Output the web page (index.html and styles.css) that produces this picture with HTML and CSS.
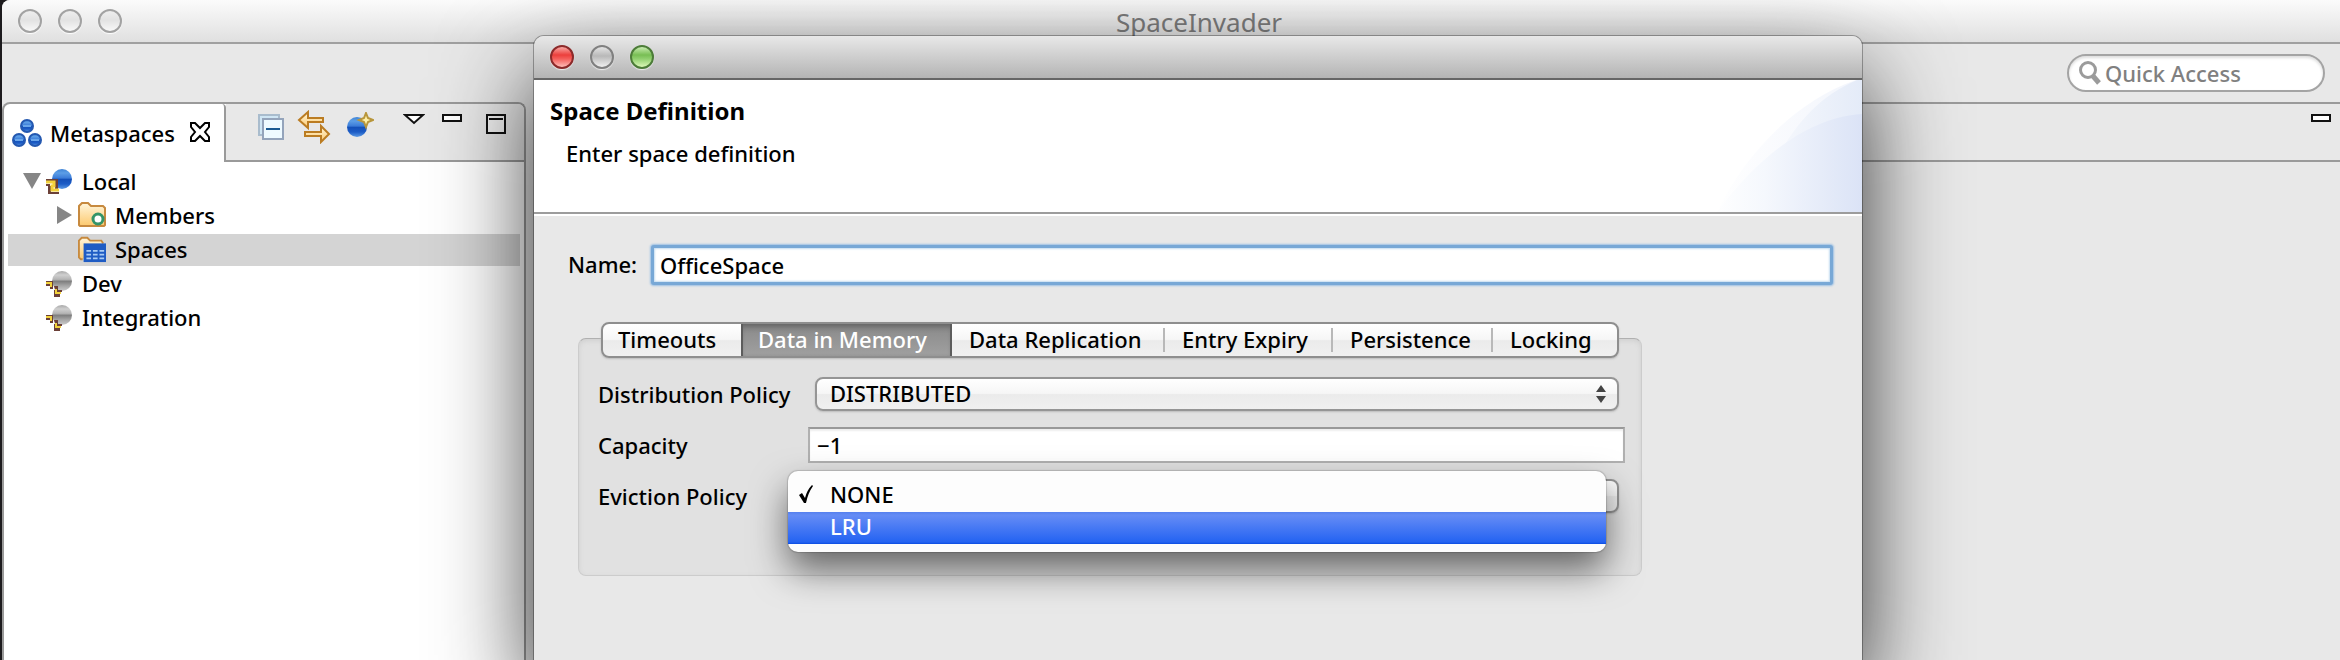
FILE: index.html
```html
<!DOCTYPE html>
<html lang="en">
<head>
<meta charset="utf-8">
<title>SpaceInvader</title>
<link rel="stylesheet" href="styles.css">
</head>
<body>
<svg class="defs" aria-hidden="true">
  <defs>
    <linearGradient id="blue" x1="0" y1="0" x2="0" y2="1">
      <stop offset="0" stop-color="#3f84d6"/><stop offset=".2" stop-color="#5c9ee6"/><stop offset=".45" stop-color="#3c7cd8"/>
      <stop offset=".52" stop-color="#1450b8"/><stop offset=".75" stop-color="#1c5cc6"/><stop offset="1" stop-color="#5c9ae4"/>
    </linearGradient>
    <linearGradient id="grey" x1="0" y1="0" x2="0" y2="1">
      <stop offset="0" stop-color="#a8a8a8"/><stop offset=".2" stop-color="#cfcfcf"/><stop offset=".42" stop-color="#b4b4b4"/>
      <stop offset=".52" stop-color="#808080"/><stop offset=".75" stop-color="#a8a8a8"/><stop offset="1" stop-color="#cccccc"/>
    </linearGradient>
    <linearGradient id="gold" x1="0" y1="0" x2="0" y2="1">
      <stop offset="0" stop-color="#fff6dc"/><stop offset="1" stop-color="#fcc96e"/>
    </linearGradient>
    <symbol id="connected" viewBox="0 0 28 28">
      <circle cx="17" cy="12" r="10" fill="url(#blue)"/>
      <path d="M1 12h12v2H1zM1 17h4v2H1zM10 14h3v8h-3zM3 19h3v7H3zM3 25h11v2H3z" fill="#6b4038"/>
      <path d="M1 15h8v4H7v4h7" fill="none" stroke="#f2d23c" stroke-width="3"/>
    </symbol>
    <symbol id="disconnected" viewBox="0 0 28 28">
      <circle cx="17" cy="12" r="10" fill="url(#grey)"/>
      <path d="M1 12h7v8H5v-3H1zM9 17h4v4h4v2h-2v5H9v-7h1z" fill="#6b4038"/>
      <path d="M1 14h5v4M11 20v4h5" fill="none" stroke="#f2d23c" stroke-width="2"/>
    </symbol>
  </defs>
</svg>

<div class="desktop">
  <main class="window">
    <header class="titlebar">
      <div class="lights">
        <button class="light" aria-label="Close window"></button>
        <button class="light" aria-label="Minimize window"></button>
        <button class="light" aria-label="Zoom window"></button>
      </div>
      <h1 class="title">SpaceInvader</h1>
    </header>

    <div class="toolbar">
      <label class="search">
        <svg width="24" height="26" viewBox="0 0 24 26" fill="none" stroke="#9b9b9b"><circle cx="10" cy="10" r="7.500" stroke-width="3"/><path d="M15 16l6 7" stroke-width="5"/></svg>
        <input type="search" placeholder="Quick Access" aria-label="Quick Access">
      </label>
    </div>

    <div class="workbench">
      <section class="view">
        <div class="view-bar">
          <div class="view-tab">
            <svg width="30" height="30" viewBox="0 0 30 30" fill="url(#blue)" stroke="#2458b0" stroke-width="2">
              <circle cx="15" cy="8" r="6"/><circle cx="7" cy="22" r="6"/><circle cx="23" cy="22" r="6"/>
              <path d="M11 8h8M3 22h8M19 22h8" stroke="#6aa6ea" stroke-width="2"/>
            </svg>
            <span>Metaspaces</span>
            <button class="tool close" aria-label="Close view"><svg width="22" height="22" viewBox="0 0 22 22"><path d="M2 2h4l5 5 5-5h4v4l-4 5 4 5v4h-4l-5-5-5 5H2v-4l4-5-4-5z" fill="#fff" stroke="#000" stroke-width="2"/></svg></button>
          </div>
          <div class="view-tools">
            <button class="tool" aria-label="Collapse all"><svg width="28" height="28" viewBox="0 0 28 28"><path d="M2 2h20v20H2z" fill="#cfe6f4" stroke="#a9bccd" stroke-width="2"/><path d="M6 6h20v20H6z" fill="#eefaff" stroke="#94a4bb" stroke-width="2"/><path d="M9 16h14" stroke="#1b5a92" stroke-width="2"/></svg></button>
            <button class="tool" aria-label="Link with editor"><svg width="34" height="34" viewBox="0 0 34 34" fill="url(#gold)" stroke="#bb7c22" stroke-width="2"><path d="M2 10l9-8v6h15v4H11v6z"/><path d="M32 24l-8-8v6H8v4h16v6z"/></svg></button>
            <button class="tool" aria-label="New metaspace"><svg width="28" height="28" viewBox="0 0 28 28"><circle cx="11" cy="15" r="10" fill="url(#blue)"/><path d="M20 1l2 5 5 2-5 2-2 5-2-5-5-2 5-2z" fill="#fff0a8" stroke="#b8963c" stroke-width="2"/></svg></button>
            <button class="tool menu" aria-label="View menu"><svg width="22" height="12" viewBox="0 0 22 12"><path d="M2 2h18l-9 8z" fill="#fff" stroke="#111" stroke-width="2"/></svg></button>
            <button class="tool" aria-label="Minimize"><svg width="22" height="10" viewBox="0 0 22 10"><path d="M2 2h18v6H2z" fill="#fff" stroke="#111" stroke-width="2"/></svg></button>
            <button class="tool maximize" aria-label="Maximize"><svg width="22" height="22" viewBox="0 0 22 22"><path d="M2 2h18v18H2z" fill="#f4f4f4" stroke="#111" stroke-width="2"/><path d="M4 6h14" stroke="#111" stroke-width="2"/></svg></button>
          </div>
        </div>
        <ul class="tree">
          <li class="node">
            <button class="twisty" aria-label="Collapse Local"><svg width="18" height="16"><path d="M0 0h18L9 16z" fill="#868686"/></svg></button>
            <svg class="icon"><use href="#connected"/></svg><span>Local</span>
          </li>
          <li class="node child">
            <button class="twisty" aria-label="Expand Members"><svg width="18" height="18"><path d="M1 0v18l15-9z" fill="#868686"/></svg></button>
            <svg class="icon" viewBox="0 0 28 28"><path d="M1 24V5l3-3h6l3 3h12l2 2v17l-1 1H2z" fill="url(#gold)" stroke="#c78a3f" stroke-width="2"/><circle cx="20" cy="18" r="5" fill="#fff" stroke="#349468" stroke-width="3"/></svg><span>Members</span>
          </li>
          <li class="node child selected">
            <span class="twisty"></span>
            <svg class="icon" viewBox="0 0 30 28"><path d="M5 25H3l-2-2V5l3-3h6l3 3h12l2 3" fill="url(#gold)" stroke="#c78a3f" stroke-width="2"/><path d="M6 8h24v20H6z" fill="#1f5cc4"/><path d="M9 16h5m2 0h5m2 0h5M9 20h5m2 0h5m2 0h5M9 24h5m2 0h5m2 0h5" stroke="#a9cbf4" stroke-width="2"/></svg><span>Spaces</span>
          </li>
          <li class="node"><span class="twisty"></span><svg class="icon"><use href="#disconnected"/></svg><span>Dev</span></li>
          <li class="node"><span class="twisty"></span><svg class="icon"><use href="#disconnected"/></svg><span>Integration</span></li>
        </ul>
      </section>
      <section class="editor">
        <div class="editor-bar">
          <button class="tool" aria-label="Minimize editor"><svg width="22" height="10" viewBox="0 0 22 10"><path d="M2 2h18v6H2z" fill="#fff" stroke="#111" stroke-width="2"/></svg></button>
        </div>
      </section>
    </div>
  </main>

  <div class="dialog" role="dialog" aria-labelledby="dialog-title">
    <div class="dialog-bar">
      <button class="light red" aria-label="Close dialog"></button>
      <button class="light dim" aria-label="Minimize dialog"></button>
      <button class="light green" aria-label="Zoom dialog"></button>
    </div>
    <header class="dialog-head">
      <div>
        <h2 id="dialog-title">Space Definition</h2>
        <p>Enter space definition</p>
      </div>
      <svg class="art" width="150" height="132" viewBox="0 0 150 132">
        <defs>
          <linearGradient id="outer" gradientUnits="userSpaceOnUse" x1="0" y1="0" x2="150" y2="0"><stop offset="0" stop-color="#fff"/><stop offset="1" stop-color="#f2f5fc"/></linearGradient>
          <linearGradient id="middle" gradientUnits="userSpaceOnUse" x1="20" y1="0" x2="150" y2="0"><stop offset="0" stop-color="#fff"/><stop offset="1" stop-color="#e4ebf8"/></linearGradient>
          <linearGradient id="inner" gradientUnits="userSpaceOnUse" x1="0" y1="0" x2="150" y2="0"><stop offset="0" stop-color="#fff"/><stop offset=".35" stop-color="#f5f8fd"/><stop offset="1" stop-color="#dbe3f6"/></linearGradient>
        </defs>
        <path d="M5 132C30 80 80 20 150 -2V132z" fill="url(#outer)"/>
        <path d="M40 132C70 60 95 20 150 -2V132z" fill="url(#middle)"/>
        <path d="M5 132C40 85 90 38 150 34V132z" fill="url(#inner)"/>
      </svg>
    </header>
    <form class="dialog-body">
      <div class="name-row">
        <label for="name">Name:</label>
        <input id="name" class="focused" type="text" value="OfficeSpace">
      </div>
      <div class="group">
        <div class="tabs" role="tablist">
          <button type="button" role="tab">Timeouts</button>
          <button type="button" role="tab" class="active" aria-selected="true">Data in Memory</button>
          <button type="button" role="tab">Data Replication</button>
          <button type="button" role="tab">Entry Expiry</button>
          <button type="button" role="tab">Persistence</button>
          <button type="button" role="tab">Locking</button>
        </div>
        <div class="fields">
          <label for="distribution">Distribution Policy</label>
          <div class="popup-button">
            <select id="distribution"><option>DISTRIBUTED</option></select>
            <svg width="10" height="18"><path d="M5 0l5 7H0zM5 18l5-7H0z" fill="#444"/></svg>
          </div>
          <label for="capacity">Capacity</label>
          <input id="capacity" type="text" value="−1">
          <label for="eviction">Eviction Policy</label>
          <div class="popup-button">
            <select id="eviction"><option>NONE</option><option>LRU</option></select>
            <ul class="menu-list" role="listbox" aria-label="Eviction Policy">
              <li role="option" aria-selected="true"><svg width="16" height="20" viewBox="0 0 16 20"><path d="M1 11l3-2 3 5Q9 6 14 1l1 1Q10 9 8 19H6z"/></svg>NONE</li>
              <li role="option" class="hover">LRU</li>
            </ul>
          </div>
        </div>
      </div>
    </form>
  </div>
</div>
</body>
</html>
```
FILE: styles.css
```css
* { box-sizing: border-box; }

body {
  margin: 0;
  font: 500 22px/30px "Noto Sans", "Open Sans", sans-serif;
  color: #000;
}

h1, h2, p, ul { margin: 0; padding: 0; }
ul { list-style: none; }
svg { display: block; flex: none; }
button, input, select { font: inherit; color: inherit; margin: 0; }
.defs { position: absolute; width: 0; height: 0; }

.desktop {
  position: relative;
  display: flex;
  min-height: 100vh;
  padding-left: 2px;
  background: #1d1b1e;
  overflow: hidden;
}

/* Main window */
.window {
  flex: 1;
  display: flex;
  flex-direction: column;
  background: #e8e8e8;
  border-top-left-radius: 8px;
}

.titlebar {
  display: flex;
  align-items: center;
  height: 44px;
  padding-left: 16px;
  background: linear-gradient(#fbfbfb, #e0e0e0);
  border-bottom: 2px solid #a0a0a0;
  border-top-left-radius: 8px;
}

.lights { display: flex; gap: 16px; width: 104px; }

.light {
  width: 24px;
  height: 24px;
  padding: 0;
  border: 2px solid #a2a2a2;
  border-radius: 50%;
  background: linear-gradient(#eee, #e2e2e2 45%, #f8f8f8);
  box-shadow: 0 1px 1px #fff;
}

.light.dim {
  border-color: #808080;
  background: linear-gradient(#e4e4e4, #b8b8b8 45%, #f0f0f0);
}
.light.red {
  border-color: #8c2a2a;
  background: linear-gradient(#f9a8a4, #ec3f3c 40%, #f4605c 60%, #ffbdb8);
}
.light.green {
  border-color: #4c7c38;
  background: linear-gradient(#c8ecb0, #78be54 40%, #92d070 60%, #dcf8b8);
}
.light.dim, .light.red, .light.green { box-shadow: 0 1px 1px #eee; }

.title {
  flex: 1;
  padding: 2px 64px 0 0;
  text-align: center;
  font-size: 26px;
  font-weight: 400;
  color: #7c7c7c;
}

.toolbar {
  display: flex;
  justify-content: flex-end;
  align-items: center;
  height: 58px;
  padding-right: 15px;
}

.search {
  display: flex;
  align-items: center;
  gap: 3px;
  width: 258px;
  height: 38px;
  padding: 0 9px;
  background: #fff;
  border: 2px solid #a4a4a4;
  border-radius: 19px;
  box-shadow: inset 0 2px 3px #ddd;
}
.search input {
  flex: 1;
  min-width: 0;
  padding: 0;
  border: 0;
  outline: 0;
  background: none;
}
.search input::placeholder { color: #808080; opacity: 1; }

.workbench { flex: 1; display: flex; gap: 8px; }

.view {
  display: flex;
  flex-direction: column;
  width: 524px;
  border: 2px solid #9a9a9a;
  border-bottom: 0;
  border-radius: 8px 8px 0 0;
  background: #fff;
}

.view-bar { display: flex; height: 58px; }

.view-tab {
  display: flex;
  align-items: center;
  gap: 8px;
  width: 222px;
  padding-left: 8px;
  border-right: 2px solid #9a9a9a;
  border-top-right-radius: 4px;
}

.tool { display: block; padding: 0; border: 0; background: none; }
.close { margin: 0 13px 2px auto; }

.view-tools {
  flex: 1;
  display: flex;
  align-items: flex-start;
  padding: 9px 16px 0 31px;
  gap: 16px;
  background: #e8e8e8;
  border-bottom: 2px solid #9a9a9a;
  border-top-right-radius: 6px;
}
.view-tools .tool:nth-child(2) { margin: -3px -4px 0 -4px; }
.view-tools .tool:nth-child(3) { margin: -1px 0 0 3px; }
.view-tools .menu { margin-left: 13px; }
.view-tools .maximize { margin-left: 6px; }

.tree { padding: 4px 4px 0; }

.node {
  display: flex;
  align-items: center;
  height: 32px;
  margin-bottom: 2px;
  padding: 0 0 2px 15px;
}
.node.child { padding-left: 48px; }
.node.selected { background: #d4d4d4; }
.twisty {
  display: grid;
  place-items: center;
  width: 18px;
  margin-right: 4px;
  padding: 0;
  border: 0;
  background: none;
}
.icon { width: 28px; height: 28px; margin-right: 9px; }

.editor {
  flex: 1;
  border-top: 2px solid #9a9a9a;
}
.editor-bar {
  display: flex;
  justify-content: flex-end;
  align-items: flex-start;
  height: 58px;
  padding: 9px 8px 0 0;
  border-bottom: 2px solid #9a9a9a;
}

/* Dialog window floating over the workbench */
.dialog {
  position: absolute;
  top: 36px;
  bottom: 0;
  left: 534px;
  right: 478px;
  display: flex;
  flex-direction: column;
  background: #e8e8e8;
  border-radius: 10px 10px 0 0;
  box-shadow: 0 0 0 1px rgba(0, 0, 0, .3), 0 40px 96px rgba(0, 0, 0, .8);
}

.dialog-bar {
  display: flex;
  align-items: center;
  gap: 16px;
  height: 44px;
  padding-left: 16px;
  background: linear-gradient(#e8e8e8, #b4b4b4);
  border-bottom: 2px solid #666;
  border-radius: 10px 10px 0 0;
}

.dialog-head {
  display: flex;
  justify-content: space-between;
  height: 136px;
  padding-left: 16px;
  background: #fff;
  border-bottom: 2px solid #fff;
  box-shadow: inset 0 -2px #9c9c9c;
}
.dialog-head h2 { margin-top: 16px; font-size: 24px; }
.dialog-head p { margin-top: 12px; padding-left: 16px; }

.dialog-body { padding: 29px 29px 0 34px; }

.name-row { display: flex; align-items: center; }
.name-row label { width: 83px; padding-bottom: 2px; }
.name-row input { flex: 1; }

input[type="text"] {
  min-width: 0;
  height: 36px;
  padding: 0 7px;
  border: 2px solid #b0b0b0;
  border-top-color: #999;
  background: #fff;
  box-shadow: inset 0 2px 2px #eee;
  outline: 0;
}
input.focused[type="text"] {
  height: 40px;
  padding: 0 6px;
  border: 3px solid #78a8d6;
  border-radius: 3px;
  box-shadow: 0 0 2px 1px #9cc0e4, inset 0 0 2px 1px #c4dcf0;
}

.group {
  margin: 53px 191px 0 10px;
  padding: 0 22px 62px 19px;
  background: #e1e1e1;
  border: 1px solid #ccc;
  border-top-color: #b0b0b0;
  border-radius: 8px;
  box-shadow: inset 0 2px 5px #d0d0d0;
}

.tabs {
  display: grid;
  grid-template-columns: 138fr 211fr 213fr 168fr 160fr 124fr;
  height: 36px;
  margin: -17px 0 19px 3px;
  border: 2px solid #8e8e8e;
  border-radius: 8px;
  background: linear-gradient(#fff, #f6f6f6 48%, #ebebeb 52%, #f0f0f0);
  box-shadow: 0 1px 2px #bbb;
}
.tabs button {
  padding: 0 0 2px 17px;
  border: 0;
  line-height: 30px;
  text-align: left;
  background: linear-gradient(#b8b8b8, #b8b8b8) right / 2px 24px no-repeat;
  white-space: nowrap;
}
.tabs button:first-child { padding-left: 15px; }
.tabs button:first-child, .tabs button:last-child { background: none; }
.tabs button.active {
  color: #fff;
  background: linear-gradient(#7c7c7c, #909090 30%, #a0a0a0);
  box-shadow: inset 2px 0 #5c5c5c, inset -2px 0 #5c5c5c, inset 0 2px 4px #666;
}

.fields {
  display: grid;
  grid-template-columns: 210px 1fr;
  row-gap: 16px;
  align-items: center;
  margin-right: -6px;
}

.popup-button {
  position: relative;
  display: grid;
  align-items: center;
  margin: 0 6px 0 7px;
}
.popup-button > select, .popup-button > svg { grid-area: 1 / 1; }
.popup-button > svg { justify-self: end; margin-right: 13px; pointer-events: none; z-index: 1; }

select {
  appearance: none;
  width: 100%;
  height: 34px;
  padding: 0 13px 2px;
  line-height: 28px;
  border: 2px solid #959595;
  border-radius: 8px;
  background: linear-gradient(#fff, #f6f6f6 48%, #ebebeb 52%, #f0f0f0);
  box-shadow: 0 1px 2px #bbb;
}

/* Open drop-down menu, laid over its button */
.menu-list {
  position: absolute;
  top: -8px;
  left: -27px;
  right: 13px;
  z-index: 2;
  padding: 9px 0 8px;
  background: #fdfdfd;
  border-radius: 10px;
  box-shadow: 0 0 1px 1px rgba(0, 0, 0, .15), 0 18px 36px rgba(0, 0, 0, .55);
}
.menu-list li {
  display: flex;
  align-items: center;
  height: 32px;
  padding: 0 0 4px 42px;
}
.menu-list li svg { width: 16px; margin: 0 16px 0 -32px; }
.menu-list .hover {
  color: #fff;
  background: linear-gradient(#5580ee, #658cf5 10%, #2463f2 94%, #0a4ce0);
}
```
